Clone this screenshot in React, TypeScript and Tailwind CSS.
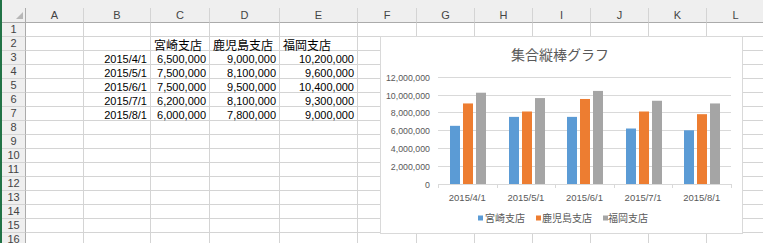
const COLS = ["A", "B", "C", "D", "E", "F", "G", "H", "I", "J", "K", "L"];
const STORES = ["宮崎支店", "鹿児島支店", "福岡支店"];
const DATA = [
  { date: "2015/4/1", values: [6500000, 9000000, 10200000] },
  { date: "2015/5/1", values: [7500000, 8100000, 9600000] },
  { date: "2015/6/1", values: [7500000, 9500000, 10400000] },
  { date: "2015/7/1", values: [6200000, 8100000, 9300000] },
  { date: "2015/8/1", values: [6000000, 7800000, 9000000] },
];
const BAR_COLORS = ["#5b9bd5", "#ed7d31", "#a5a5a5"];
const ROW_COUNT = 16;

const fmt = (n: number) => n.toLocaleString("en-US");

function cellContent(row: number, col: number) {
  if (row === 2 && col >= 2 && col <= 4) return { text: STORES[col - 2], right: false, jp: true };
  const item = DATA[row - 3];
  if (!item) return null;
  if (col === 1) return { text: item.date, right: true, jp: false };
  if (col >= 2 && col <= 4) return { text: fmt(item.values[col - 2]), right: true, jp: false };
  return null;
}

function Sheet() {
  return (
    <div className="flex-1 flex flex-col">
      <div className="h-[8px] shrink-0 bg-[#efefef]" />
      <div className="shrink-0 grid grid-cols-[24px_58px_67px_59px_70px_78px_59px_58px_58px_58px_58px_58px_58px] grid-rows-[15px] auto-rows-[14px]">
        <div className="relative bg-[#efefef] border-r border-b border-[#ababab]">
          <svg className="absolute left-0 top-0" width="24" height="15">
            <polygon points="21,4 21,11 14,11" fill="#b7b7b7" />
          </svg>
        </div>
        {COLS.map((c) => (
          <div key={c} className="bg-[#efefef] border-r border-r-[#d4d4d4] border-b border-b-[#ababab] flex items-center justify-center text-[11px] leading-none text-[#444] font-['Liberation_Sans',sans-serif]">
            {c}
          </div>
        ))}
        {Array.from({ length: ROW_COUNT }, (_, i) => i + 1).map((r) => (
          <div key={r} className="contents">
            <div className="bg-[#efefef] border-r border-r-[#ababab] border-b border-b-[#d4d4d4] flex items-center justify-center text-[11px] leading-none text-[#444] font-['Liberation_Sans',sans-serif]">
              {r}
            </div>
            {COLS.map((c, ci) => {
              const content = cellContent(r, ci);
              return (
                <div key={c} className={`border-r border-b border-[#d4d4d4] flex items-end whitespace-nowrap px-[3px] text-black ${content?.right ? "justify-end" : "justify-start"}`}>
                  {content && (
                    <span className={content.jp ? "text-[12px] leading-[11px] font-['Noto_Sans_CJK_JP',sans-serif]" : "text-[11px] leading-[9px] font-['Liberation_Sans',sans-serif]"}>
                      {content.text}
                    </span>
                  )}
                </div>
              );
            })}
          </div>
        ))}
      </div>
    </div>
  );
}

function Chart() {
  const left = 57;
  const right = 350;
  const zero = 147;
  const step = 17.9;
  const catW = (right - left) / 5;
  const y = (v: number) => zero - (v / 2000000) * step;
  const ticks = [0, 2000000, 4000000, 6000000, 8000000, 10000000, 12000000];
  const legendItems = [
    { sq: 97, tx: 104 },
    { sq: 155, tx: 161 },
    { sq: 222, tx: 227 },
  ];

  return (
    <div className="absolute left-[380px] top-[36px] w-[363px] h-[198px] bg-white border border-[#d9d9d9]">
      <svg width="361" height="196" className="font-['Liberation_Sans','Noto_Sans_CJK_JP',sans-serif]">
        <text x="179" y="23" textAnchor="middle" fontSize="14" fill="#595959" fontFamily="'Noto Sans CJK JP', sans-serif">
          集合縦棒グラフ
        </text>
        {ticks.map((t) => {
          const ly = Math.round(y(t)) + 0.5;
          return (
            <g key={t}>
              <line x1={left} x2={right} y1={ly} y2={ly} stroke="#d9d9d9" strokeWidth="1" />
              <text x="49" y={ly + 3} textAnchor="end" fontSize="8.8" fill="#595959">
                {fmt(t)}
              </text>
            </g>
          );
        })}
        {Array.from({ length: 6 }, (_, i) => {
          const tx = Math.round(left + i * catW) + 0.5;
          return <line key={i} x1={tx} x2={tx} y1={zero} y2={zero + 4} stroke="#d9d9d9" strokeWidth="1" />;
        })}
        {DATA.map((d, i) => {
          const x0 = left + i * catW;
          return (
            <g key={d.date}>
              {d.values.map((v, si) => (
                <rect key={si} x={Math.round(x0 + 12 + si * 13)} y={y(v)} width="10" height={zero - y(v)} fill={BAR_COLORS[si]} />
              ))}
              <text x={x0 + catW / 2} y="163.5" textAnchor="middle" fontSize="9.5" fill="#595959">
                {d.date}
              </text>
            </g>
          );
        })}
        {legendItems.map((l, i) => (
          <g key={i}>
            <rect x={l.sq} y="178.5" width="5" height="5" fill={BAR_COLORS[i]} />
            <text x={l.tx} y="185" fontSize="10" fill="#595959" fontFamily="'Noto Sans CJK JP', sans-serif">
              {STORES[i]}
            </text>
          </g>
        ))}
      </svg>
    </div>
  );
}

export default function App() {
  return (
    <div className="relative w-[763px] h-[243px] overflow-hidden bg-white flex">
      <div className="w-[2px] shrink-0 bg-[#217346]" />
      <Sheet />
      <Chart />
    </div>
  );
}
